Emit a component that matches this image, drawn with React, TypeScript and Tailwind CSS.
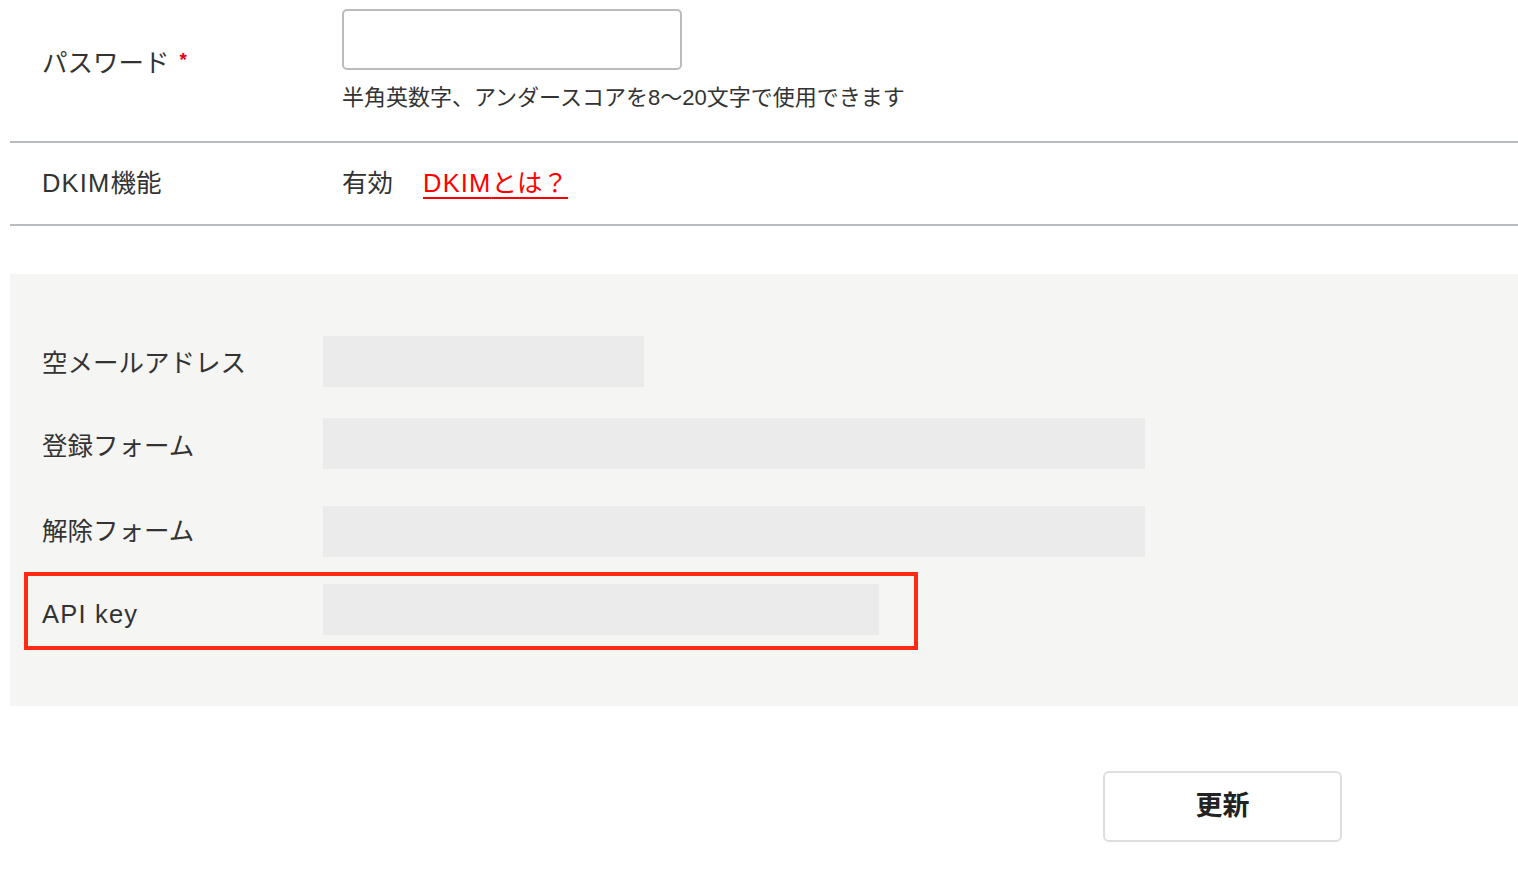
import React from 'react';

const font = { fontFamily: '"Liberation Sans", "Noto Sans CJK JP", sans-serif' };

function Latin({ children }: { children: React.ReactNode }) {
  return <span className="tracking-[1.2px]">{children}</span>;
}

function PanelRow({ label, boxWidth, labelPad = 'pt-[3px]' }: { label: React.ReactNode; boxWidth: string; labelPad?: string }) {
  return (
    <div className="flex items-center">
      <div className={`w-[281px] shrink-0 text-[25.5px] text-[#333] ${labelPad}`}>{label}</div>
      <div className={`h-[51px] bg-[#ebebeb] ${boxWidth}`}></div>
    </div>
  );
}

export default function App() {
  return (
    <div className="min-h-screen bg-white pl-[10px] text-[#333]" style={font}>
      {/* Password */}
      <div className="flex border-b-2 border-[#b9bdc0] pt-[9px] pb-[29px]">
        <div className="w-[332px] shrink-0 pl-[32px] pt-[38px] text-[25.5px] leading-[32px]">
          パスワード
          <span className="relative -top-[6px] ml-[10px] text-[19px] font-bold text-[#e60012]">*</span>
        </div>
        <div>
          <input
            type="password"
            className="block h-[61px] w-[340px] rounded-[5px] border-2 border-[#bcbcbc] bg-white outline-none"
          />
          <p className="mt-[14px] text-[22px] leading-[28px]">
            半角英数字、アンダースコアを8〜20文字で使用できます
          </p>
        </div>
      </div>

      {/* DKIM */}
      <div className="flex h-[83px] items-center border-b-2 border-[#b9bdc0]">
        <div className="w-[332px] shrink-0 pl-[32px] text-[25.5px]">
          <Latin>DKIM</Latin>機能
        </div>
        <div className="flex items-center text-[25.5px]">
          <span>有効</span>
          <a href="#" className="ml-[30px] text-[#ff0000] underline underline-offset-[5px] decoration-2">
            <Latin>DKIM</Latin>とは？
          </a>
        </div>
      </div>

      {/* Panel */}
      <div className="mt-[48px] bg-[#f5f5f4] pt-[62px] pb-[56px]">
        <div className="pl-[32px]">
          <PanelRow label="空メールアドレス" boxWidth="w-[321px]" />
          <div className="mt-[31px]">
            <PanelRow label="登録フォーム" boxWidth="w-[822px]" labelPad="pt-[5px]" />
          </div>
          <div className="mt-[37px]">
            <PanelRow label="解除フォーム" boxWidth="w-[822px]" labelPad="pt-0" />
          </div>
        </div>
        <div className="ml-[14px] mt-[15px] w-[894px] border-4 border-[#ff2a12] pl-[14px] pt-[8px] pb-[11px]">
          <PanelRow label={<Latin>API key</Latin>} boxWidth="w-[556px]" labelPad="pt-[9px]" />
        </div>
      </div>

      {/* Submit */}
      <div className="mt-[65px] pl-[1093px]">
        <button className="flex h-[71px] w-[239px] items-center justify-center rounded-[6px] border-2 border-[#dedede] bg-white text-[27px] font-bold text-[#222]">
          更新
        </button>
      </div>
    </div>
  );
}
